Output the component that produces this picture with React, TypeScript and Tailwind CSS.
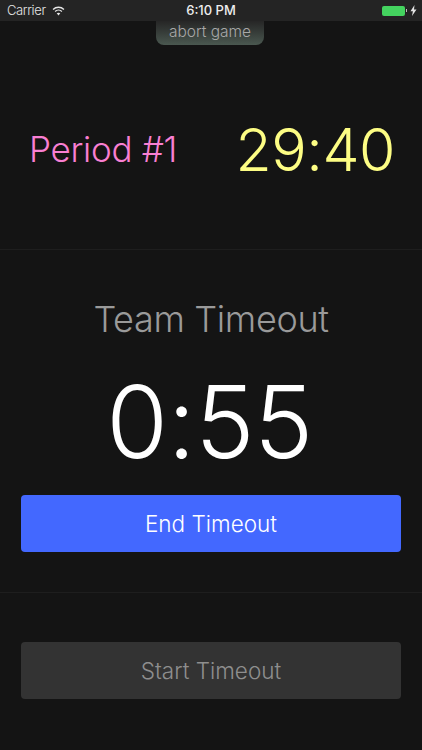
const font = { fontFamily: 'Inter, "Liberation Sans", Arial, sans-serif' };

function Wifi() {
  return (
    <svg width="13" height="10" viewBox="0 0 14 11" className="ml-[6px]" fill="none" stroke="#e8e8e8">
      <path d="M1 3.8C4.4 .6 9.6 .6 13 3.8" strokeWidth="1.5" />
      <path d="M3.3 6C5.4 4 8.6 4 10.7 6" strokeWidth="1.5" />
      <path d="M7 10.5 5 8.1C6.1 7.2 7.9 7.2 9 8.1Z" fill="#e8e8e8" stroke="none" />
    </svg>
  );
}

function StatusBar() {
  return (
    <div className="relative flex h-[21px] items-center bg-[#242424] pl-[7px] pr-[5px] text-[13px] text-[#e4e4e4]">
      <span className="font-light tracking-[-0.4px]">Carrier</span>
      <Wifi />
      <span className="absolute left-0 right-0 text-center font-medium text-[#eeeeee]">6:10 PM</span>
      <div className="ml-auto flex items-center">
        <div className="h-[10px] w-[23px] rounded-[2px] bg-[#44d35f]" />
        <div className="ml-[1px] h-[3px] w-[1px] bg-[#bbbbbb]" />
        <svg width="7" height="11" viewBox="0 0 7 11" className="ml-[3px]">
          <path d="M4.5 0 .5 6.2h2.4L2 11l4.5-6.6H4z" fill="#e4e4e4" />
        </svg>
      </div>
    </div>
  );
}

function Divider() {
  return <div className="h-px bg-[#1e1e1e]" />;
}

export default function App() {
  return (
    <div className="flex h-[750px] w-[422px] flex-col overflow-hidden bg-[#141414]" style={font}>
      <StatusBar />
      <div className="relative flex h-[228px] items-center justify-between pl-[29px] pr-[27px] pt-[28px]">
        <div className="absolute left-[156px] top-0 flex h-[24px] w-[108px] items-center justify-center rounded-b-[8px] bg-gradient-to-b from-[#262626] to-[#4a5850] pb-[2px] text-[15.5px] font-light text-[#a8a8a8]">
          abort game
        </div>
        <span className="text-[35px] font-light tracking-[-0.3px] text-[#f97fd2]">Period #1</span>
        <span className="text-[59px] font-light leading-none tracking-[-0.5px] text-[#fdfd84]">29:40</span>
      </div>
      <Divider />
      <div className="flex h-[342px] flex-col items-center px-[21px]">
        <div className="mt-[45px] text-[36px] font-light leading-[48px] tracking-[-0.35px] text-[#9a9a9a]">Team Timeout</div>
        <div className="mt-[19px] pr-[3px] text-[100px] font-light leading-[120px] tracking-[-0.5px] text-white">0:55</div>
        <button className="mt-[13px] h-[57px] w-full rounded-[4px] bg-[#4368ff] text-[22.5px] font-light text-white">End Timeout</button>
      </div>
      <Divider />
      <div className="px-[21px] pt-[49px]">
        <button className="h-[57px] w-full rounded-[4px] bg-[#333333] pt-[1px] text-[22.5px] font-light text-[#8e8e8e]">Start Timeout</button>
      </div>
    </div>
  );
}
